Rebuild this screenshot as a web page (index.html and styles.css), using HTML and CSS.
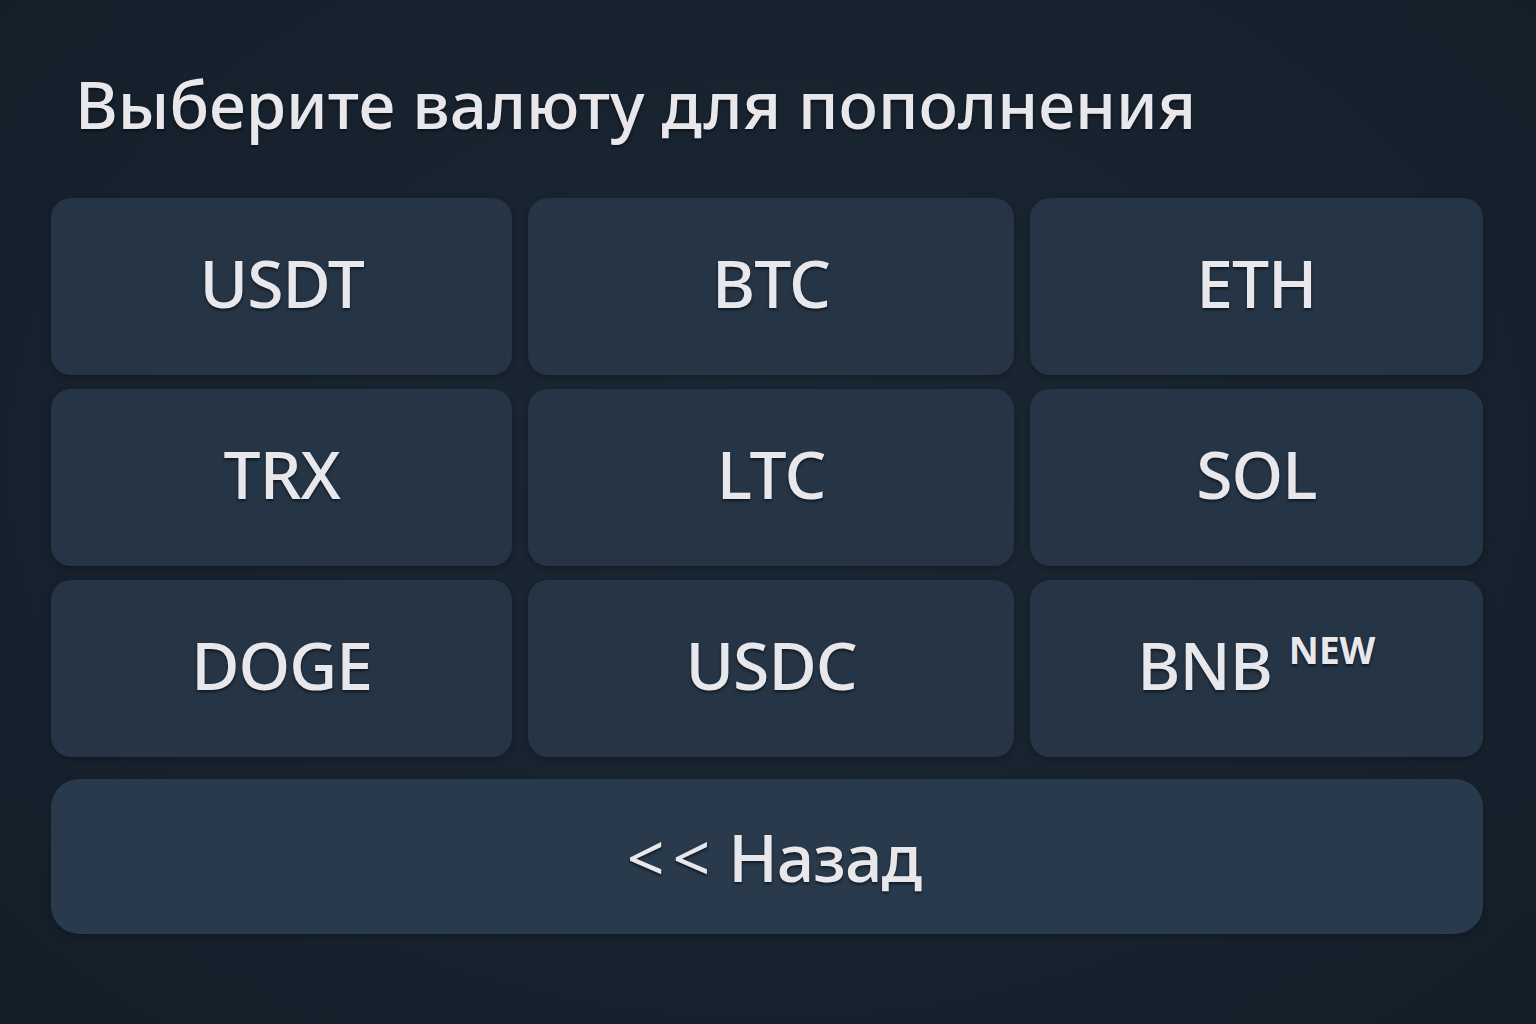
FILE: index.html
```html
<!DOCTYPE html>
<html lang="ru">
<head>
<meta charset="utf-8">
<link rel="stylesheet" href="styles.css">
</head>
<body>
<main class="panel">
  <h1 class="title">Выберите валюту для пополнения</h1>
  <div class="grid">
    <button class="btn">USDT</button>
    <button class="btn">BTC</button>
    <button class="btn">ETH</button>
    <button class="btn">TRX</button>
    <button class="btn">LTC</button>
    <button class="btn">SOL</button>
    <button class="btn">DOGE</button>
    <button class="btn">USDC</button>
    <button class="btn">BNB <span class="new">NEW</span></button>
  </div>
  <button class="btn back"><span class="arrows">&lt;&lt;</span> Назад</button>
</main>
</body>
</html>
```
FILE: styles.css
```css
html, body {
  margin: 0;
  height: 100%;
}
body {
  background: radial-gradient(ellipse at 50% 45%, #1b2734 0%, #17222e 60%, #141e29 100%);
  font-family: "Noto Sans", "Open Sans", sans-serif;
  color: #e8e8ec;
}
.panel {
  padding: 64px 53px 0 51px;
}
.title {
  margin: 0 0 0 24px;
  font-size: 65.5px;
  font-weight: 500;
  line-height: 80px;
  height: 134px;
  text-shadow: 0 2px 3px rgba(0,0,0,0.5);
}
.grid {
  display: grid;
  grid-template-columns: 461fr 485fr 453fr;
  grid-auto-rows: 177px;
  column-gap: 16px;
  row-gap: 14px;
}
.btn {
  border: none;
  border-radius: 20px;
  background: #253546;
  color: #e8e8ec;
  font-family: "Noto Sans", "Open Sans", sans-serif;
  font-size: 66px;
  font-weight: 500;
  letter-spacing: -1px;
  text-shadow: 0 2px 3px rgba(0,0,0,0.55);
  box-shadow: 0 2px 6px rgba(0,0,0,0.25);
  display: flex;
  align-items: center;
  justify-content: center;
  padding: 0 0 9px 0;
}
.new {
  font-size: 37px;
  font-weight: 700;
  align-self: flex-start;
  margin-top: 44px;
  margin-left: 17px;
  letter-spacing: 0;
}
.back {
  width: 100%;
  height: 155px;
  margin-top: 22px;
  border-radius: 28px;
  background: #283a4b;
  padding: 0 0 2px 14px;
}
.arrows {
  letter-spacing: 8px;
  margin-right: 10px;
  font-weight: 400;
}
```
